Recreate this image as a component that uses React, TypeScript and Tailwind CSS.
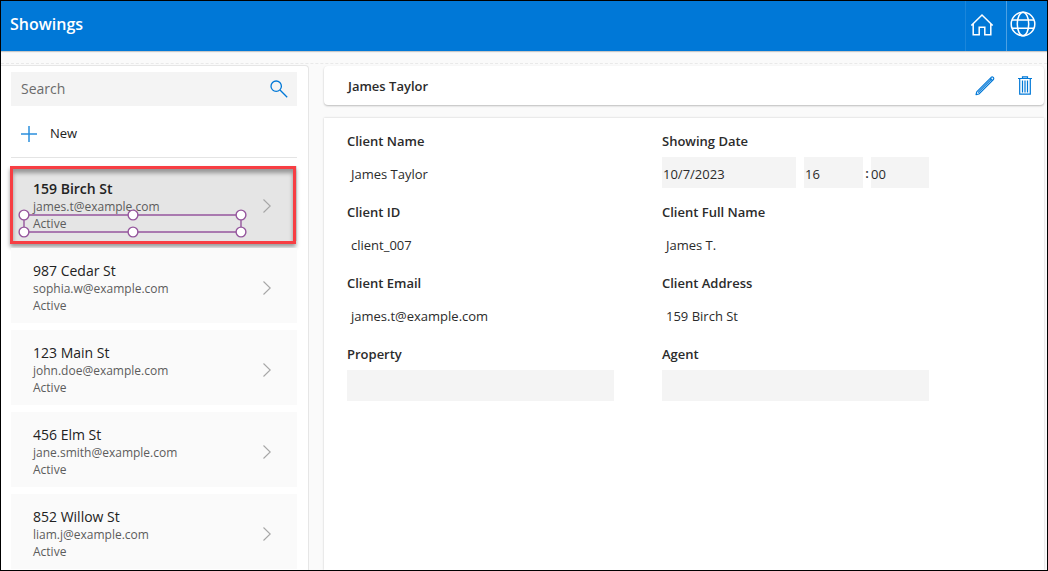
import React from "react";

type Showing = { address: string; email: string; status: string };

const showings: Showing[] = [
  { address: "159 Birch St", email: "james.t@example.com", status: "Active" },
  { address: "987 Cedar St", email: "sophia.w@example.com", status: "Active" },
  { address: "123 Main St", email: "john.doe@example.com", status: "Active" },
  { address: "456 Elm St", email: "jane.smith@example.com", status: "Active" },
  { address: "852 Willow St", email: "liam.j@example.com", status: "Active" },
];

function HomeIcon() {
  return (
    <svg width="24" height="24" viewBox="0 0 24 24" fill="none" stroke="white" strokeWidth="1.5" aria-hidden="true">
      <path d="M1.300 12.500 12 2l10.700 10.500M3.200 11V21.800H9.200V14.200H14.800V21.800H20.800V11" />
    </svg>
  );
}

function GlobeIcon() {
  return (
    <svg width="26" height="26" viewBox="0 0 26 26" fill="none" stroke="white" strokeWidth="1.5" aria-hidden="true">
      <circle cx="13" cy="13" r="11.8" />
      <ellipse cx="13" cy="13" rx="5.700" ry="11.800" />
      <path d="M2 9H24M2 17.200H24" />
    </svg>
  );
}

function SearchIcon() {
  return (
    <svg width="18" height="18" viewBox="0 0 18 18" fill="none" stroke="#0078d7" strokeWidth="1.3" aria-hidden="true">
      <circle cx="6.200" cy="6.200" r="5.200" />
      <path d="M10 10 17.200 17.200" />
    </svg>
  );
}

function PlusIcon() {
  return (
    <svg width="16" height="16" viewBox="0 0 16 16" fill="none" stroke="#2b8fdd" strokeWidth="1.5" aria-hidden="true">
      <path d="M8 0V16M0 8H16" />
    </svg>
  );
}

function PencilIcon() {
  return (
    <svg width="20" height="20" viewBox="0 0 20 20" fill="none" stroke="#0078d7" strokeWidth="1.100" strokeLinejoin="round" aria-hidden="true">
      <path d="M1 18.600 1.700 15.800 16.200 1.300Q17.300.5 18.300 1.400Q19.200 2.500 18.400 3.500L3.900 18ZM3 16.700 17 2.700M15 2.500 17.200 4.700" />
    </svg>
  );
}

function TrashIcon() {
  return (
    <svg width="14" height="19" viewBox="0 0 14 19" fill="none" stroke="#0078d7" strokeWidth="1.200" aria-hidden="true">
      <path d="M0 2.500H14M4.500 2V.8H9.500V2M1.700 2.500V18.200H12.300V2.500M4.500 4.500V16.500M7 4.500V16.500M9.500 4.500V16.500" />
    </svg>
  );
}

function ChevronIcon() {
  return (
    <svg width="8" height="14" viewBox="0 0 8 14" fill="none" stroke="#a6a6a6" strokeWidth="1.100" aria-hidden="true">
      <path d="M.5.5 7.200 7 .5 13.500" />
    </svg>
  );
}

function SelectionFrame() {
  return (
    <svg className="pointer-events-none absolute left-[7px] top-[42px]" width="230" height="30" viewBox="0 0 230 30" fill="white" stroke="#95569d" strokeWidth="1.400" aria-hidden="true">
      <path d="M6 7H223V24H6Z" fill="none" />
      {[6, 115, 223].map((x) => (
        <React.Fragment key={x}>
          <circle cx={x} cy="7" r="4.900" />
          <circle cx={x} cy="24" r="4.900" />
        </React.Fragment>
      ))}
    </svg>
  );
}

function ShowingRow({ item, selected }: { item: Showing; selected: boolean }) {
  return (
    <li className="relative">
      <button
        type="button"
        aria-pressed={selected}
        className={
          selected
            ? "flex h-[75px] w-full items-center bg-[#e5e5e5] pl-[22px] pr-[26px] pt-1 text-left"
            : "flex h-[75px] w-full items-center bg-[#fafafa] pl-[22px] pr-[26px] pt-1 text-left"
        }
      >
        <span className="flex flex-1 flex-col text-xs leading-[17px] text-[#5c5c5c]">
          <span className={selected ? "text-sm leading-[18px] font-semibold text-[#222]" : "text-sm leading-[18px] text-[#222]"}>
            {item.address}
          </span>
          <span>{item.email}</span>
          <span>{item.status}</span>
        </span>
        <ChevronIcon />
      </button>
      {selected && (
        <>
          <span className="pointer-events-none absolute -left-px right-px top-0 -bottom-[3px] border-[3px] border-[#f73e43] shadow-[0_3px_4px_rgba(0,0,0,0.4),inset_0_4px_4px_rgba(0,0,0,0.35)]" />
          <SelectionFrame />
        </>
      )}
    </li>
  );
}

function Field({ label, id, children }: { label: string; id?: string; children: React.ReactNode }) {
  return (
    <div className="flex flex-col gap-1.5">
      {id ? (
        <label htmlFor={id} className="font-semibold leading-5">{label}</label>
      ) : (
        <span className="font-semibold leading-5">{label}</span>
      )}
      <div className="flex h-[31px] items-center">{children}</div>
    </div>
  );
}

function FieldValue({ children }: { children: React.ReactNode }) {
  return <span className="pl-1 pt-1">{children}</span>;
}

export default function App() {
  return (
    <div className="flex h-screen flex-col overflow-hidden border border-black bg-[#fafafa] font-['Open_Sans','Noto_Sans',sans-serif] text-[13px] text-[#2b2b2b]">
      <header className="flex h-[50px] shrink-0 items-center bg-[#0078d7] pl-[9px] text-white shadow-[0_1px_1px_rgba(0,0,0,0.2)]">
        <h1 className="flex-1 pb-1 text-base font-semibold">Showings</h1>
        <button type="button" aria-label="Home" className="flex h-full w-[41px] items-center justify-center border-l border-[#1a86db] pb-[3px] pr-2">
          <HomeIcon />
        </button>
        <button type="button" aria-label="Language" className="flex h-full w-[41px] items-center border-l border-[#4da1e3] pb-1 pl-[3px]">
          <GlobeIcon />
        </button>
      </header>

      <div className="mt-3 flex min-h-0 flex-1 gap-[15px] border-t border-dashed border-[#e9e9e9] pt-px">
        <aside className="flex w-[308px] shrink-0 flex-col overflow-hidden rounded-tr border-r border-t border-[#e6e6e6] bg-white pl-2.5 pr-[11px] pt-1.5">
          <div className="flex h-[34px] shrink-0 items-center bg-[#f4f4f4] pl-2.5 pr-[9px]">
            <input type="search" aria-label="Search" placeholder="Search" className="min-w-0 flex-1 bg-transparent text-sm outline-none placeholder:text-[#6b6b6b]" />
            <button type="button" aria-label="Run search">
              <SearchIcon />
            </button>
          </div>
          <button type="button" className="flex h-[52px] shrink-0 items-center gap-[13px] border-b border-[#e4e4e4] pl-2.5 pt-1 text-left text-[#222]">
            <PlusIcon />
            New
          </button>
          <ul className="mt-2 flex flex-col gap-[7px]">
            {showings.map((item, index) => (
              <ShowingRow key={item.email} item={item} selected={index === 0} />
            ))}
          </ul>
        </aside>

        <main className="mr-[3px] flex min-w-0 flex-1 flex-col gap-[13px] pt-px">
          <div className="flex h-[39px] shrink-0 items-center rounded-sm bg-white pl-6 pr-3 shadow-[0_1px_2px_rgba(0,0,0,0.25)]">
            <h2 className="flex-1 pt-0.5 font-semibold">James Taylor</h2>
            <div className="flex items-center gap-[23px]">
              <button type="button" aria-label="Edit"><PencilIcon /></button>
              <button type="button" aria-label="Delete"><TrashIcon /></button>
            </div>
          </div>

          <form className="min-h-0 flex-1 bg-white pl-[23px] pt-[13px] shadow-[0_0_2px_rgba(0,0,0,0.2)]">
            <div className="grid grid-cols-[267px_267px] gap-x-12 gap-y-[14px]">
              <Field label="Client Name"><FieldValue>James Taylor</FieldValue></Field>
              <Field label="Showing Date" id="date">
                <input id="date" defaultValue="10/7/2023" className="mr-2 h-full w-[134px] bg-[#f4f4f4] pl-px pt-0.5 outline-none" />
                <input aria-label="Hour" defaultValue="16" className="h-full w-[59px] bg-[#f4f4f4] pl-px pt-0.5 outline-none" />
                <span className="w-2 pt-0.5 text-center font-semibold">:</span>
                <input aria-label="Minute" defaultValue="00" className="h-full min-w-0 flex-1 bg-[#f4f4f4] pt-0.5 outline-none" />
              </Field>
              <Field label="Client ID"><FieldValue>client_007</FieldValue></Field>
              <Field label="Client Full Name"><FieldValue>James T.</FieldValue></Field>
              <Field label="Client Email"><FieldValue>james.t@example.com</FieldValue></Field>
              <Field label="Client Address"><FieldValue>159 Birch St</FieldValue></Field>
              <Field label="Property" id="property">
                <input id="property" className="h-full w-full bg-[#f4f4f4] px-1 outline-none" />
              </Field>
              <Field label="Agent" id="agent">
                <input id="agent" className="h-full w-full bg-[#f4f4f4] px-1 outline-none" />
              </Field>
            </div>
          </form>
        </main>
      </div>
    </div>
  );
}
